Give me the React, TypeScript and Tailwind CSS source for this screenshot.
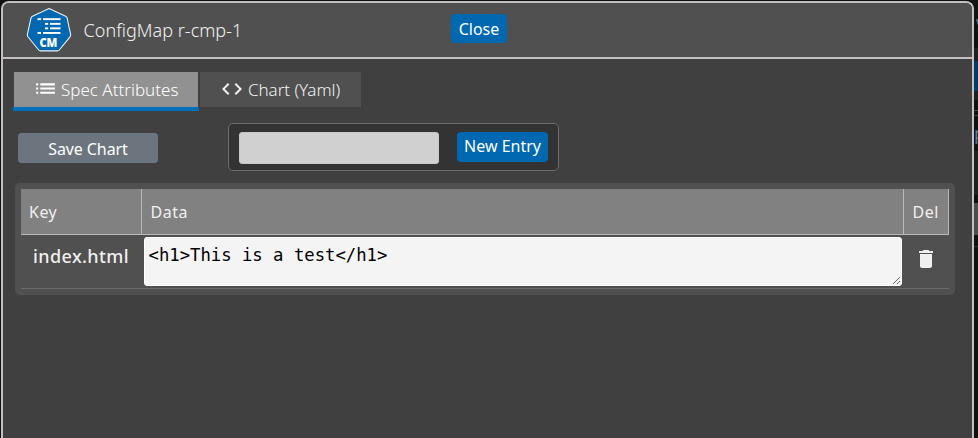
import React from "react";
import { MdList, MdCode, MdDelete } from "react-icons/md";

function ConfigMapIcon() {
  return (
    <svg width="46" height="46" viewBox="0 0 46 46" className="shrink-0">
      <path
        d="M23 1.6 L39.6 9.2 Q40.8 9.8 41.1 11 L44.6 27.3 Q44.8 28.6 44 29.8 L33.3 43 Q32.6 43.9 31.4 43.9 L14.6 43.9 Q13.4 43.9 12.7 43 L1.9 29.8 Q1.2 28.6 1.4 27.3 L5 11 Q5.3 9.8 6.5 9.2 Z"
        fill="#0067b1"
        stroke="#eef4f8"
        strokeWidth="1.1"
      />
      <g fill="#fff">
        <rect x="11.5" y="11.2" width="3.6" height="1.9" />
        <rect x="17" y="11.2" width="17.5" height="1.9" />
        <rect x="19" y="15.9" width="3.2" height="1.9" />
        <rect x="24" y="15.9" width="10.5" height="1.9" />
        <rect x="19" y="20.4" width="3.2" height="1.9" />
        <rect x="24" y="20.4" width="10.5" height="1.9" />
        <rect x="11.5" y="25" width="3.6" height="1.9" />
        <rect x="17" y="25" width="17.5" height="1.9" />
      </g>
      <text x="13.4" y="40" fontFamily="Open Sans, sans-serif" fontWeight="800" fontSize="11.4" textLength="18" lengthAdjust="spacingAndGlyphs" fill="#fff">
        CM
      </text>
    </svg>
  );
}

function Header() {
  return (
    <div className="flex h-[56px] items-start border-b-2 border-[#c4bfc0] bg-[#505050]">
      <div className="flex w-[448px] pl-[23px] pt-[4px]">
        <ConfigMapIcon />
        <span className="whitespace-nowrap pl-[11.5px] pt-[10px] text-[18px] font-light leading-[26px] tracking-[0.03px] text-[#f0f0f0]">
          ConfigMap r-cmp-1
        </span>
      </div>
      <button className="mt-[11px] h-[29px] w-[56px] rounded bg-[#0067b1] text-[16px] leading-[28px] text-white">
        Close
      </button>
    </div>
  );
}

function Tabs() {
  return (
    <div className="flex h-[39px] items-start gap-px pl-[10px]">
      <div className="flex h-[39px] w-[186px] flex-col">
        <div className="mx-px flex h-[35px] items-center bg-[#919191] pl-[19px] text-white">
          <MdList size={25} className="-mt-[3px] shrink-0" />
          <span className="whitespace-nowrap pl-[3px] text-[17px] font-light leading-[24px]">Spec Attributes</span>
        </div>
        <div className="h-[4px] bg-[#0072bb]" />
      </div>
      <div className="flex h-[35px] w-[161px] items-center bg-[#505050] pl-[20px] text-[#f0f0f0]">
        <MdCode size={24} className="-mt-[2px] shrink-0" />
        <span className="whitespace-nowrap pl-[4px] text-[17px] font-light leading-[24px] tracking-[-0.05px]">Chart (Yaml)</span>
      </div>
    </div>
  );
}

function Actions() {
  return (
    <div className="flex h-[48px] items-start pl-[15px]">
      <button className="mt-[10px] h-[30px] w-[140px] rounded bg-[#6c757d] pt-px text-[16px] leading-[30px] tracking-[-0.1px] text-white">
        Save Chart
      </button>
      <div className="ml-[70px] flex h-[48px] w-[331px] items-start rounded-[5px] border border-[#6c6c6c] bg-[#333333] pl-[10px] pt-[8px]">
        <input aria-label="Entry name" className="h-[32px] w-[200px] rounded-[3px] border border-[#c8c8c8] bg-[#d0d0d0]" />
        <button className="ml-[18px] flex h-[30px] w-[91px] justify-center whitespace-nowrap rounded bg-[#0067b1] text-[16px] leading-[28px] text-white">
          New Entry
        </button>
      </div>
    </div>
  );
}

function EntryTable() {
  return (
    <div className="ml-[12px] h-[112px] w-[940px] rounded-[5px] bg-[#505050] p-[6px]">
      <div className="flex h-[46px] border-b border-[#b9b9b9] bg-[#818181] text-[16px] leading-[46px] text-[#f0f0f0]">
        <div className="w-[121px] border-r border-[#b9b9b9] pl-[8px] tracking-[0.5px]">Key</div>
        <div className="w-[762px] border-r border-[#b9b9b9] pl-[8.5px] tracking-[0.5px]">Data</div>
        <div className="w-[45px] border-r border-[#b9b9b9] pl-[8.5px] tracking-[0.5px]">Del</div>
      </div>
      <div className="flex h-[54px] items-start border-b border-[#6c6c6c] pt-[2px]">
        <div className="w-[123px] pl-[12px] pt-[7px] text-[18px] font-medium leading-[25px] tracking-[0.4px] text-[#f0f0f0]">index.html</div>
        <textarea
          aria-label="Data"
          spellCheck={false}
          defaultValue="<h1>This is a test</h1>"
          className="h-[49px] w-[758px] resize rounded-[3px] border border-white bg-[#f4f4f4] px-[3.5px] py-[6px] font-['DejaVu_Sans_Mono',monospace] text-[17.25px] leading-[23px] text-black"
        />
        <MdDelete size={24} className="ml-[12px] mt-[10px] text-[#f0f0f0]" />
      </div>
    </div>
  );
}

function Backdrop() {
  return (
    <div className="flex w-[4px] flex-col overflow-hidden bg-[#111111]">
      <div className="h-[18px] bg-[#131313]" />
      <div className="h-[30px] overflow-hidden pl-[2px] text-[12px] leading-[8px] text-[#6790ad]">v</div>
      <div className="h-[13px] bg-[#202020]" />
      <div className="h-[30px] bg-[#003b65]" />
      <div className="h-[9px] bg-[#202020]" />
      <div className="mt-[10px] h-[6px] border-y border-[#444444]" />
      <div className="mt-[10px] h-[20px] overflow-hidden text-[18px] leading-[14px] text-[#577c99]">p</div>
      <div className="mt-[5px] h-[44px] bg-[#202020]" />
      <div className="mt-[8px] h-[32px] bg-[#4d4d4d]" />
      <div className="mt-[11px] h-px bg-[#333333]" />
    </div>
  );
}

export default function App() {
  return (
    <div className="flex h-[438px] w-[978px] overflow-hidden bg-[#111114] font-['Noto_Sans',sans-serif]">
      <div className="ml-px mt-px h-[437px] w-[973px] shrink-0 overflow-hidden rounded-t-[8px] border-x-2 border-t-2 border-[#c4bfc0] bg-[#404040]">
        <Header />
        <div className="flex flex-col gap-[12px] pt-[13px]">
          <Tabs />
          <Actions />
          <EntryTable />
        </div>
      </div>
      <Backdrop />
    </div>
  );
}
